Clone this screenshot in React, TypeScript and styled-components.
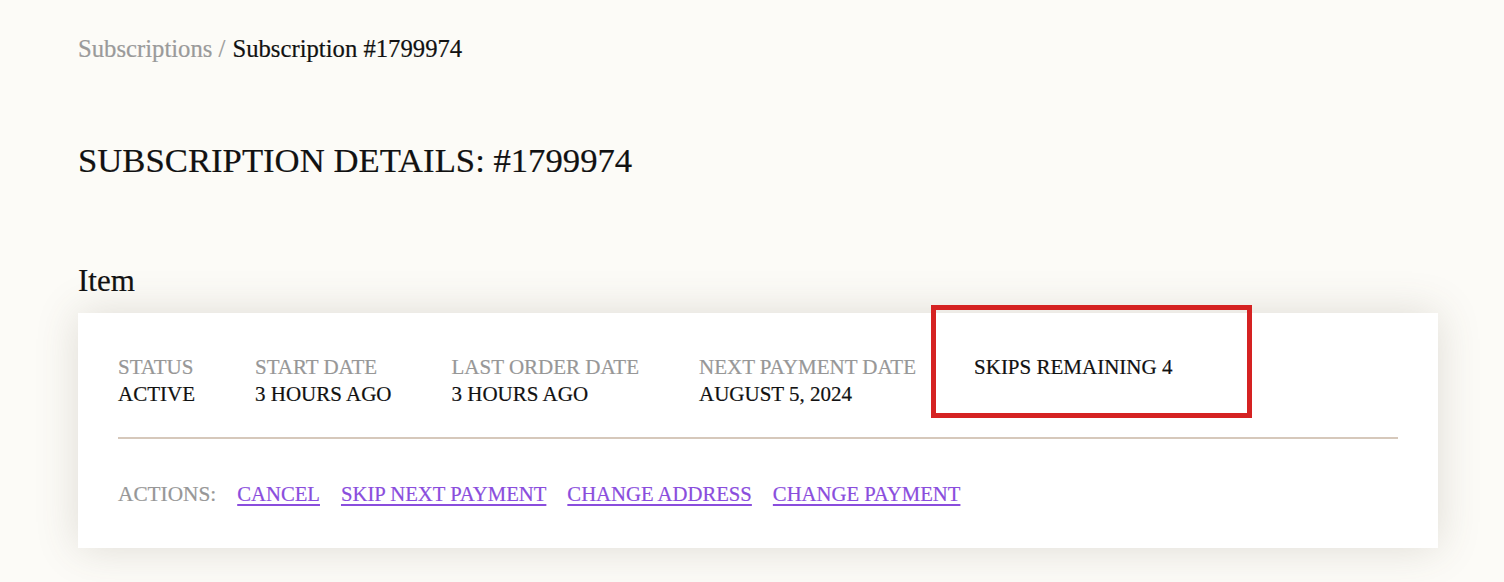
import React from "react";
import styled, { createGlobalStyle } from "styled-components";

const GlobalStyle = createGlobalStyle`
  html, body {
    margin: 0;
    padding: 0;
    background: #fcfbf7;
    font-family: "Liberation Serif", "DejaVu Serif", serif;
    color: #111;
    -webkit-text-stroke: 0.2px currentColor;
  }
`;

const Page = styled.div`
  padding: 35px 66px 34px 78px;
`;

const Breadcrumb = styled.nav`
  display: flex;
  gap: 7px;
  font-size: 24.7px;
  line-height: 28px;
`;

const Crumb = styled.span<{ $current?: boolean }>`
  color: ${(p) => (p.$current ? "#111" : "#9a9a9a")};
`;

const Title = styled.h1`
  margin: 78px 0 0;
  font-size: 34.7px;
  line-height: 40px;
  font-weight: 400;
  text-transform: uppercase;
`;

const SectionTitle = styled.h2`
  margin: 82px 0 0;
  font-size: 31px;
  line-height: 36px;
  font-weight: 400;
`;

const Card = styled.div`
  margin-top: 14px;
  background: #fff;
  padding: 41px 40px 40px;
  box-shadow: 0 0 40px rgba(90, 80, 60, 0.18);
`;

const InfoRow = styled.div`
  display: flex;
  gap: 60px;
  padding-bottom: 29px;
  border-bottom: 2px solid #d6c8bb;
`;

const Field = styled.div`
  display: flex;
  flex-direction: column;
  font-size: 21px;
  line-height: 27px;
  text-transform: uppercase;
`;

const Label = styled.span`
  color: #979797;
`;

const Value = styled.span`
  color: #111;
`;

const Highlighted = styled.div`
  position: relative;
  margin-left: -2px;
  font-size: 21px;
  line-height: 27px;
  text-transform: uppercase;
`;

const Frame = styled.div`
  position: absolute;
  top: -49px;
  left: -43px;
  width: 321px;
  height: 113px;
  box-sizing: border-box;
  border: 5px solid #d52222;
  pointer-events: none;
`;

const ActionsRow = styled.div`
  display: flex;
  align-items: baseline;
  gap: 21px;
  margin-top: 42px;
  font-size: 20.7px;
  line-height: 27px;
  text-transform: uppercase;
`;

const ActionsLabel = styled.span`
  font-size: 21.3px;
  color: #979797;
`;

const ActionLink = styled.a`
  color: #8a4ddd;
  text-decoration: underline;
  text-decoration-thickness: 2px;
  text-underline-offset: 3px;
  cursor: pointer;
`;

const fields = [
  { label: "Status", value: "Active" },
  { label: "Start date", value: "3 hours ago" },
  { label: "Last order date", value: "3 hours ago" },
  { label: "Next payment date", value: "August 5, 2024" },
];

const actions = ["Cancel", "Skip next payment", "Change address", "Change payment"];

export default function App() {
  return (
    <>
      <GlobalStyle />
      <Page>
        <Breadcrumb>
          <Crumb>Subscriptions /</Crumb>
          <Crumb $current>Subscription #1799974</Crumb>
        </Breadcrumb>
        <Title>Subscription details: #1799974</Title>
        <SectionTitle>Item</SectionTitle>
        <Card>
          <InfoRow>
            {fields.map((f) => (
              <Field key={f.label}>
                <Label>{f.label}</Label>
                <Value>{f.value}</Value>
              </Field>
            ))}
            <Highlighted>
              Skips remaining 4
              <Frame />
            </Highlighted>
          </InfoRow>
          <ActionsRow>
            <ActionsLabel>Actions:</ActionsLabel>
            {actions.map((a) => (
              <ActionLink key={a}>{a}</ActionLink>
            ))}
          </ActionsRow>
        </Card>
      </Page>
    </>
  );
}
